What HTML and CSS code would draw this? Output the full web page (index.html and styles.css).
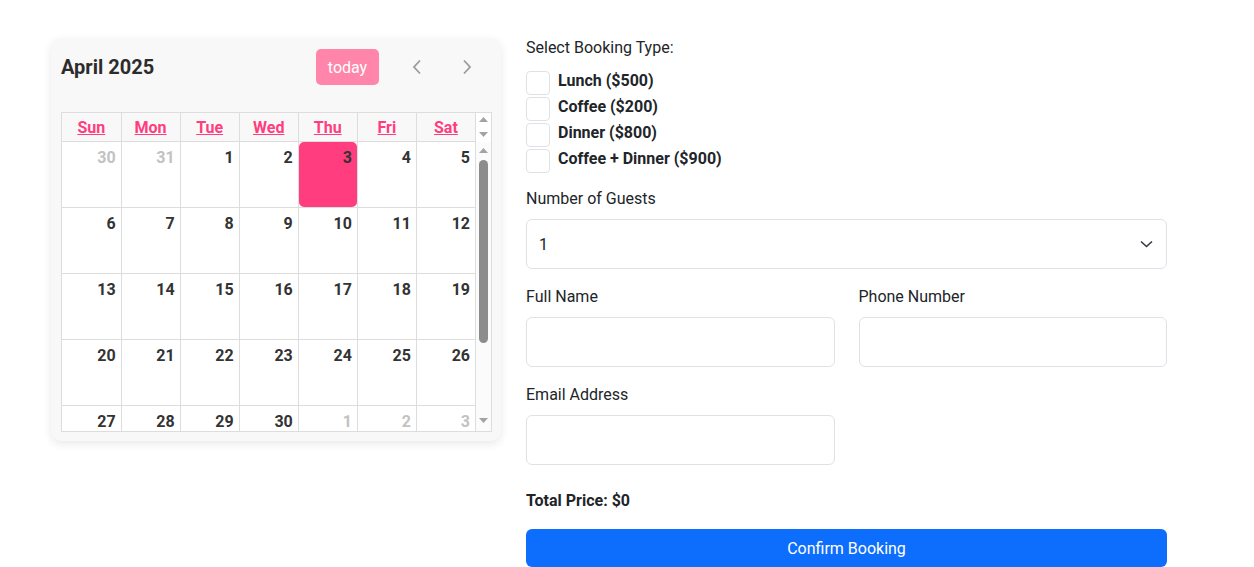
FILE: index.html
```html
<!DOCTYPE html>
<html lang="en">
<head>
  <meta charset="UTF-8" />
  <meta name="viewport" content="width=device-width, initial-scale=1.0"/>
  <title>Book a Table</title>
  <link rel="stylesheet" href="styles.css">
</head>
<body>
  <div class="page">
    <div class="calendar-card">
      <div class="toolbar">
        <h2 class="cal-title">April 2025</h2>
        <div class="toolbar-right">
          <button class="today-btn" type="button">today</button>
          <button class="nav-btn" type="button" aria-label="prev">
            <svg width="10" height="16" viewBox="0 0 10 16"><polyline points="8,1.5 2,8 8,14.5" fill="none" stroke="#9b9b9b" stroke-width="1.8"/></svg>
          </button>
          <button class="nav-btn" type="button" aria-label="next">
            <svg width="10" height="16" viewBox="0 0 10 16"><polyline points="2,1.5 8,8 2,14.5" fill="none" stroke="#9b9b9b" stroke-width="1.8"/></svg>
          </button>
        </div>
      </div>

      <div class="grid">
        <div class="grid-head">
          <table>
            <tr>
              <th><a href="#">Sun</a></th>
              <th><a href="#">Mon</a></th>
              <th><a href="#">Tue</a></th>
              <th><a href="#">Wed</a></th>
              <th><a href="#">Thu</a></th>
              <th><a href="#">Fri</a></th>
              <th><a href="#">Sat</a></th>
            </tr>
          </table>
          <div class="sb sb-head">
            <svg class="arrow" width="9" height="5" viewBox="0 0 9 5"><polygon points="0,5 4.5,0 9,5" fill="#a3a3a3"/></svg>
            <svg class="arrow" width="9" height="5" viewBox="0 0 9 5"><polygon points="0,0 4.5,5 9,0" fill="#a3a3a3"/></svg>
          </div>
        </div>
        <div class="grid-body">
          <div class="body-clip">
            <table>
              <tr>
                <td><div class="day other">30</div></td>
                <td><div class="day other">31</div></td>
                <td><div class="day">1</div></td>
                <td><div class="day">2</div></td>
                <td><div class="day today">3</div></td>
                <td><div class="day">4</div></td>
                <td><div class="day">5</div></td>
              </tr>
              <tr>
                <td><div class="day">6</div></td>
                <td><div class="day">7</div></td>
                <td><div class="day">8</div></td>
                <td><div class="day">9</div></td>
                <td><div class="day">10</div></td>
                <td><div class="day">11</div></td>
                <td><div class="day">12</div></td>
              </tr>
              <tr>
                <td><div class="day">13</div></td>
                <td><div class="day">14</div></td>
                <td><div class="day">15</div></td>
                <td><div class="day">16</div></td>
                <td><div class="day">17</div></td>
                <td><div class="day">18</div></td>
                <td><div class="day">19</div></td>
              </tr>
              <tr>
                <td><div class="day">20</div></td>
                <td><div class="day">21</div></td>
                <td><div class="day">22</div></td>
                <td><div class="day">23</div></td>
                <td><div class="day">24</div></td>
                <td><div class="day">25</div></td>
                <td><div class="day">26</div></td>
              </tr>
              <tr>
                <td><div class="day">27</div></td>
                <td><div class="day">28</div></td>
                <td><div class="day">29</div></td>
                <td><div class="day">30</div></td>
                <td><div class="day other">1</div></td>
                <td><div class="day other">2</div></td>
                <td><div class="day other">3</div></td>
              </tr>
            </table>
          </div>
          <div class="sb sb-body">
            <div class="sb-btn">
              <svg class="arrow" width="9" height="5" viewBox="0 0 9 5"><polygon points="0,5 4.5,0 9,5" fill="#a3a3a3"/></svg>
            </div>
            <div class="sb-thumb"></div>
            <div class="sb-btn sb-btn-down">
              <svg class="arrow" width="9" height="5" viewBox="0 0 9 5"><polygon points="0,0 4.5,5 9,0" fill="#a3a3a3"/></svg>
            </div>
          </div>
        </div>
      </div>
    </div>

    <form class="booking-form">
      <div class="group-label">Select Booking Type:</div>
      <div class="check-list">
        <label class="check-row"><input type="checkbox" value="500"> <span>Lunch ($500)</span></label>
        <label class="check-row"><input type="checkbox" value="200"> <span>Coffee ($200)</span></label>
        <label class="check-row"><input type="checkbox" value="800"> <span>Dinner ($800)</span></label>
        <label class="check-row"><input type="checkbox" value="900"> <span>Coffee + Dinner ($900)</span></label>
      </div>

      <div class="field guests">
        <label for="guests">Number of Guests</label>
        <div class="select-wrap">
          <select id="guests">
            <option>1</option>
            <option>2</option>
            <option>3</option>
            <option>4</option>
          </select>
          <svg class="select-arrow" width="13" height="8" viewBox="0 0 13 8"><polyline points="1,1.5 6.5,6.5 12,1.5" fill="none" stroke="#343a40" stroke-width="1.6"/></svg>
        </div>
      </div>

      <div class="field-row">
        <div class="field">
          <label for="fullname">Full Name</label>
          <input type="text" id="fullname">
        </div>
        <div class="field">
          <label for="phone">Phone Number</label>
          <input type="tel" id="phone">
        </div>
      </div>

      <div class="field-row">
        <div class="field">
          <label for="email">Email Address</label>
          <input type="email" id="email">
        </div>
      </div>

      <p class="total">Total Price: $0</p>

      <button type="submit" class="confirm-btn">Confirm Booking</button>
    </form>
  </div>
</body>
</html>
```

FILE: styles.css
```css
body {
  margin: 0;
  font-family: Roboto, "Liberation Sans", Arial, sans-serif;
  font-size: 16px;
  color: #212529;
  background: #ffffff;
}

.page {
  display: flex;
  align-items: flex-start;
  gap: 25px;
  padding: 36px 0 0 51px;
}

/* calendar */
.calendar-card {
  width: 450px;
  box-sizing: border-box;
  margin-top: 2px;
  padding: 10px 9px 9px 10px;
  background: #f8f8f8;
  border-radius: 10px;
  box-shadow: 0 3px 10px rgba(0,0,0,0.09);
}

.toolbar {
  display: flex;
  align-items: center;
  justify-content: space-between;
  height: 38px;
  margin-bottom: 26px;
}

.cal-title {
  margin: 0;
  font-size: 20px;
  font-weight: 700;
  color: #2c2c2c;
}

.toolbar-right {
  display: flex;
  align-items: center;
  gap: 10px;
  padding-right: 5px;
}

.today-btn {
  height: 36px;
  width: 63px;
  margin-right: 8px;
  border: none;
  border-radius: 5px;
  background: #ff85ab;
  color: #ffffff;
  font-family: inherit;
  font-size: 16px;
  padding: 0;
}

.nav-btn {
  width: 40px;
  height: 36px;
  border: none;
  background: transparent;
  padding: 0;
  display: flex;
  align-items: center;
  justify-content: center;
}

.grid {
  border: 1px solid #dddddd;
  background: #ffffff;
}

.grid table {
  width: 100%;
  table-layout: fixed;
  border-collapse: collapse;
}

.grid-head {
  display: flex;
  height: 29px;
  background: #f8f8f8;
}

.grid-head th {
  height: 28px;
  padding: 0;
  border-right: 1px solid #dddddd;
  border-bottom: 1px solid #dddddd;
  text-align: center;
  vertical-align: middle;
}

.grid-head a {
  color: #ff3d7f;
  font-weight: 700;
}

.grid-body {
  display: flex;
  height: 289px;
}

.body-clip {
  flex: 1;
  overflow: hidden;
}

.grid-body td {
  padding: 0;
  height: 65px;
  border-right: 1px solid #dddddd;
  border-bottom: 1px solid #dddddd;
  vertical-align: top;
}

.day {
  height: 65px;
  box-sizing: border-box;
  padding: 6px 5px 4px;
  text-align: right;
  font-weight: 700;
  color: #333333;
}

.day.other {
  color: #c2c2c2;
}

.day.today {
  background: #ff3d7f;
  border-radius: 5px;
}

/* fake classic scrollbar */
.sb {
  flex: 0 0 15px;
  display: flex;
  flex-direction: column;
  align-items: center;
  background: #fbfbfb;
}

.sb-head {
  justify-content: space-between;
  padding: 4px 0 5px;
  box-sizing: border-box;
  background: #ffffff;
}

.arrow {
  display: block;
}

.sb-btn {
  height: 16px;
  display: flex;
  align-items: center;
  justify-content: center;
}

.sb-thumb {
  width: 9px;
  height: 183px;
  margin-top: 2px;
  border-radius: 5px;
  background: #8c8c8c;
}

.sb-btn-down {
  margin-top: auto;
  margin-bottom: 3px;
}

/* form */
.booking-form {
  width: 641px;
}

.group-label {
  line-height: 24px;
  margin-bottom: 10px;
}

.check-row {
  display: flex;
  align-items: flex-start;
  gap: 8px;
  height: 26px;
  font-weight: 700;
}

.check-row input {
  appearance: none;
  margin: 1px 0 0;
  width: 24px;
  height: 24px;
  border: 1px solid #dee2e6;
  border-radius: 4px;
  background: #ffffff;
}

.check-row span {
  line-height: 22px;
}

.field label {
  display: block;
  line-height: 24px;
  margin-bottom: 8px;
}

.guests {
  margin-top: 13px;
}

.select-wrap {
  position: relative;
}

.select-wrap select {
  appearance: none;
  width: 100%;
  height: 50px;
  padding: 0 12px;
  border: 1px solid #dee2e6;
  border-radius: 6px;
  background: #ffffff;
  font-family: inherit;
  font-size: 16px;
  color: #212529;
}

.select-arrow {
  position: absolute;
  right: 14px;
  top: 21px;
  pointer-events: none;
}

.field-row {
  display: grid;
  grid-template-columns: 1fr 1fr;
  gap: 24px;
  margin-top: 16px;
}

.field input {
  width: 100%;
  box-sizing: border-box;
  height: 50px;
  border: 1px solid #dee2e6;
  border-radius: 6px;
  padding: 0 12px;
  font-family: inherit;
  font-size: 16px;
}

.total {
  margin: 24px 0 16px;
  line-height: 24px;
  font-weight: 700;
}

.confirm-btn {
  width: 100%;
  height: 38px;
  border: none;
  border-radius: 6px;
  background: #0d6efd;
  color: #ffffff;
  font-family: inherit;
  font-size: 16px;
}
```
